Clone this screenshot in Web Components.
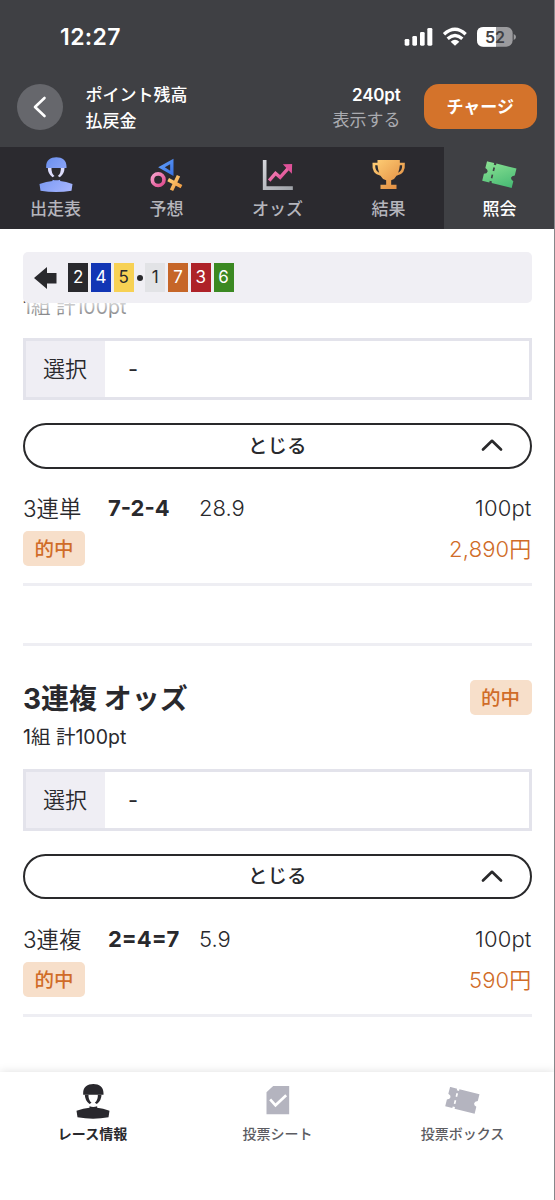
<!DOCTYPE html>
<html lang="ja">
<head>
<meta charset="utf-8">
<title>投票照会</title>
<style>
html,body{margin:0;padding:0}
body{width:555px;height:1200px;overflow:hidden;background:#fff;color:#29292d;font-family:Inter,"Noto Sans CJK JP",sans-serif}
</style>
</head>
<body>
<vote-app></vote-app>
<script>
const define=(name,html)=>customElements.define(name,class extends HTMLElement{
  constructor(){super();this.attachShadow({mode:'open'}).innerHTML=typeof html==='function'?html(this):html}
});
const jockey=(f,s)=>`<path fill="${f}" d="M137 84v-5C137 61 150 52 167.500 52S198 61 198 79v5ZM117 132Q138 125 156 123V119Q167 123 179 119V123Q196 125 216 132L213 152Q167 160 120 152Z"/><path fill="${s}" d="M142 84h11Q152 99 162 108L156 112Q142 101 142 84ZM192 84h-11Q182 99 172 108L178 112Q192 101 192 84Z"/>`;
const ticket=f=>`<g transform="translate(672 104) rotate(14)"><path fill="${f}" fill-rule="evenodd" d="M-44-30H-24V-25H-17V-30H45V-9Q36-6 36 0T45 9V30H-17V25H-24V30H-46V9Q-37 6-37 0T-46-9V-30ZM-23-17V-6H-18V-17ZM-23 5V16H-18V5Z"/></g>`;
const grad=(id,a,b)=>`<linearGradient id="${id}" x1="0" y1="0" x2="1" y2="1"><stop stop-color="${a}"/><stop offset="1" stop-color="${b}"/></linearGradient>`;
const icons={
 racer:['112.5 51 108 108',grad('b','#638bed','#a9b7ff')+jockey('url(#b)','#dcdcfb')],
 predict:['445.5 51 108 108',grad('b','#69a6ff','#356fe2')+grad('p','#f7a0cc','#e04b8c')+grad('o','#ffd47e','#ed963d')+'<path fill="url(#b)" fill-rule="evenodd" d="M519 56V108L473 82ZM509 73 493 82 509 92Z"/><circle cx="473" cy="119" r="17.500" fill="none" stroke="url(#p)" stroke-width="11"/><path d="M503 119 543 140M534 107 513 151" fill="none" stroke="url(#o)" stroke-width="11"/>'],
 odds:['778.5 51 108 108',grad('g','#d7d7dc','#9da1a7')+grad('p','#fa92bf','#d83e8b')+'<path fill="url(#g)" d="M787 60h11v79h79v11H787Z"/><path fill="none" stroke="url(#p)" stroke-width="10" d="M806 122 825 100 839 112 865 83"/><path fill="#df5299" d="M847 73 875 72 874 101Z"/>'],
 trophy:['286.5 51 108 108',grad('o','#ffd077','#df853b')+'<path fill="url(#o)" fill-rule="evenodd" d="M306 60H373V68H388Q391 103 363 107Q358 117 347 121V134H363V147H315V134H332V121Q320 117 315 107Q288 103 291 68H306ZM299 76Q299 94 311 98Q307 88 306 76ZM380 76H373Q372 88 368 98Q380 94 380 76Z"/>'],
 ticket:['619.5 51 108 108',grad('g','#8be293','#45b873')+ticket('url(#g)')],
 racerDark:['112.5 49 108 108',jockey('#29282d','#29282d')],
 sheet:['778.5 99 108 108','<path fill="#b4b4bf" d="M818 108H866V193H798V127Z"/><path fill="none" stroke="#fff" stroke-width="8" d="M809 148 825 166 857 136"/>'],
 ticketGray:['619.5 52 108 108',ticket('#b4b4bf')]
};
define('ui-icon',e=>{const i=icons[e.getAttribute('name')];return `<style>:host{display:block;width:36px;height:36px}svg{display:block}</style><svg width="36" height="36" viewBox="${i[0]}">${i[1]}</svg>`});

define('status-bar',`<style>
:host{display:flex;height:84px;box-sizing:border-box;padding:0 38px 0 60px;color:#fff;justify-content:space-between;align-items:flex-start}
time{font-weight:600;font-size:23px;line-height:30px;margin-top:22px;letter-spacing:.4px}
svg{display:block;margin-top:26px}
</style><time>12:27</time><svg width="113" height="22" viewBox="390 78 339 66">
<g fill="#fff"><rect x="392" y="117" width="14" height="20" rx="4"/><rect x="415" y="108" width="14" height="29" rx="4"/><rect x="438" y="96" width="14" height="41" rx="4"/><rect x="460" y="84" width="15" height="53" rx="4"/></g>
<g fill="none" stroke="#fff" stroke-width="10"><path d="M510 103Q543 73 575 103"/><path d="M521 116Q543 97 565 116"/></g><path fill="#fff" d="M530 125Q543 114 556 125L543 137Z"/>
<rect x="609" y="81" width="107" height="59" rx="19" fill="#9b9b9e"/><path fill="#fff" d="M666 81H628Q609 81 609 100V121Q609 140 628 140H666Z"/><path fill="#9b9b9e" d="M719 102Q726 105 726 111T719 120Z"/>
<text x="663" y="128" text-anchor="middle" font-family="Inter,sans-serif" font-size="48" font-weight="600" fill="#3f4044">52</text></svg>`);

define('account-bar',`<style>
:host{display:flex;height:63px;box-sizing:border-box;padding:0 18px 0 17px;color:#fff;font-size:17px;line-height:25.500px;font-weight:500}
.back{width:46px;height:46px;border-radius:50%;background:#66676c;display:block}
.l{margin:-1px 0 0 22.500px;flex:1;font-weight:450}.r{text-align:right;margin:-1.500px 23px 0 0;color:#aaabb0;font-weight:400}.r b{color:#fff;font-weight:600;letter-spacing:-.2px}
.charge{width:113.500px;height:45px;border-radius:15px;background:#d4732b;text-align:center;line-height:47px;font-weight:700}
</style><svg class="back" viewBox="0 0 46 46"><path d="M27.500 14 18 23 27.500 32" fill="none" stroke="#fff" stroke-width="2.600" stroke-linecap="round" stroke-linejoin="round"/></svg>
<div class="l">ポイント残高<br>払戻金</div><div class="r"><b>240pt</b><br>表示する</div><div class="charge">チャージ</div>`);

define('nav-tab',e=>`<style>
:host{display:flex;flex:1;flex-direction:column;align-items:center;background:#2b2a2f;color:#b5b5bc;padding-top:10px;font-size:17px;line-height:24px;font-weight:500;box-sizing:border-box}
:host([active]){background:#3f4044;color:#fff}
span{margin-top:4px}
</style><ui-icon name="${e.getAttribute('icon')}"></ui-icon><span><slot></slot></span>`);
define('nav-tabs',`<style>:host{display:flex;height:82px}</style><nav-tab icon="racer">出走表</nav-tab><nav-tab icon="predict">予想</nav-tab><nav-tab icon="odds">オッズ</nav-tab><nav-tab icon="trophy">結果</nav-tab><nav-tab icon="ticket" active>照会</nav-tab>`);

define('car-number',e=>`<style>:host{display:block;width:20px;height:28.500px;text-align:center;font-size:17px;line-height:28px;background:${e.getAttribute('bg')};color:${e.getAttribute('fg')||'#fff'}}</style><slot></slot>`);
define('line-up',`<style>
:host{display:flex;align-items:center;height:51px;border-radius:5px;background:#f0eff4;padding-left:11px;box-sizing:border-box;gap:2.750px}
svg{display:block;margin-right:8.500px}i{width:6px;height:6px;border-radius:50%;background:#29292d}
</style><svg width="23" height="22" viewBox="0 0 23 22"><path fill="#29292d" d="M0 11 13 0V6H22.500V16.500H13V22Z"/></svg>
<car-number bg="#29292d">2</car-number><car-number bg="#1236b5">4</car-number><car-number bg="#f7d154" fg="#29292d">5</car-number><i></i><car-number bg="#e2e3e6" fg="#29292d">1</car-number><car-number bg="#c66628">7</car-number><car-number bg="#ae2228">3</car-number><car-number bg="#3b8922">6</car-number>`);

define('hit-tag',`<style>:host{display:block;width:62px;height:35px;border-radius:5px;background:#f7dfca;color:#d06c28;text-align:center;font-size:19.500px;line-height:37px;font-weight:500}</style><slot></slot>`);
define('select-box',`<style>
:host{display:flex;height:62px;box-sizing:border-box;border:3px solid #e3e3eb;font-size:22px;line-height:56px;font-weight:400}
.k{width:79px;background:#efeef4;padding-left:17px;box-sizing:border-box;font-weight:350}.v{padding-left:23px}
</style><div class="k">選択</div><div class="v">-</div>`);
define('close-button',`<style>
:host{display:flex;height:45.500px;box-sizing:border-box;border:2.500px solid #29292b;border-radius:23px;justify-content:center;align-items:center;position:relative;font-size:19.500px;font-weight:500;line-height:30px}
svg{position:absolute;right:27px;top:13px}
</style><span><slot></slot></span><svg width="22" height="14" viewBox="0 0 22 14"><path d="M2 11.500 11 2.800 20 11.500" fill="none" stroke="#29292b" stroke-width="2.700" stroke-linecap="round" stroke-linejoin="round"/></svg>`);
define('bet-row',`<style>
:host{display:block;border-bottom:3px solid #eeeef3;height:92px;box-sizing:border-box;font-size:22px;line-height:36px}
.a,.b{display:flex;justify-content:space-between}.a{height:37px;line-height:29px}
.t{width:85px;font-weight:350;font-size:22.400px}.c{width:91px;font-weight:700}.o{flex:1;font-weight:350}.p{font-weight:350}.y{color:#d06c28;font-weight:350}
.p,.y{letter-spacing:.15px}
</style><div class="a"><span class="t"><slot name="type"></slot></span><span class="c"><slot name="combo"></slot></span><span class="o"><slot name="odds"></slot></span><span class="p"><slot name="stake"></slot></span></div><div class="b"><hit-tag>的中</hit-tag><span class="y"><slot name="pay"></slot></span></div>`);

define('result-list',`<style>
:host{display:flex;flex-direction:column;flex:1;padding:23px 23.500px 0 23px;min-height:0}
line-up{position:relative;z-index:2}
.fade{height:35px;position:relative}
.sub{font-size:19.500px;line-height:26px;height:26px;font-weight:400}
.fade .sub{position:absolute;left:0;top:-9px}.fade::after{content:"";position:absolute;z-index:1;inset:0 0 auto;height:20px;background:linear-gradient(rgba(255,255,255,.8),rgba(255,255,255,.2))}
close-button{margin:23px 0 25.500px}
.sep{height:60px;border-bottom:3px solid #eeeef3;box-sizing:border-box}
.h{display:flex;justify-content:space-between;margin-top:34px;height:44px}
h2{margin:0;font-size:28px;line-height:38px;font-weight:700}
.s2{margin-bottom:18.500px}
</style><line-up></line-up><div class="fade"><div class="sub">1組 計100pt</div></div>
<select-box></select-box><close-button>とじる</close-button>
<bet-row><span slot="type">3連単</span><span slot="combo">7-2-4</span><span slot="odds">28.9</span><span slot="stake">100pt</span><span slot="pay">2,890円</span></bet-row>
<div class="sep"></div>
<div class="h"><h2>3連複 オッズ</h2><hit-tag>的中</hit-tag></div><div class="sub s2">1組 計100pt</div>
<select-box></select-box><close-button>とじる</close-button>
<bet-row><span slot="type">3連複</span><span slot="combo">2=4=7</span><span slot="odds">5.9</span><span slot="stake">100pt</span><span slot="pay">590円</span></bet-row>`);

define('foot-item',e=>`<style>:host{display:flex;flex:1;flex-direction:column;align-items:center;padding-top:11px;font-size:14px;line-height:20px;font-weight:500;color:#5c5c62}:host([active]){color:#29292d;font-weight:700}span{margin-top:5px}</style><ui-icon name="${e.getAttribute('icon')}"></ui-icon><span><slot></slot></span>`);
define('foot-bar',`<style>:host{display:flex;height:128px;background:#fff;box-shadow:0 0 9px rgba(0,0,0,.13)}</style><foot-item icon="racerDark" active>レース情報</foot-item><foot-item icon="sheet">投票シート</foot-item><foot-item icon="ticketGray">投票ボックス</foot-item>`);

define('vote-app',`<style>:host{display:flex;flex-direction:column;width:555px;height:1200px;position:relative;overflow:hidden}header{background:#3f4044}.edge{position:absolute;right:0;top:0;width:1px;height:1200px;background:#86878a}</style><header><status-bar></status-bar><account-bar></account-bar><nav-tabs></nav-tabs></header><result-list></result-list><foot-bar></foot-bar><div class="edge"></div>`);
</script>
</body>
</html>
